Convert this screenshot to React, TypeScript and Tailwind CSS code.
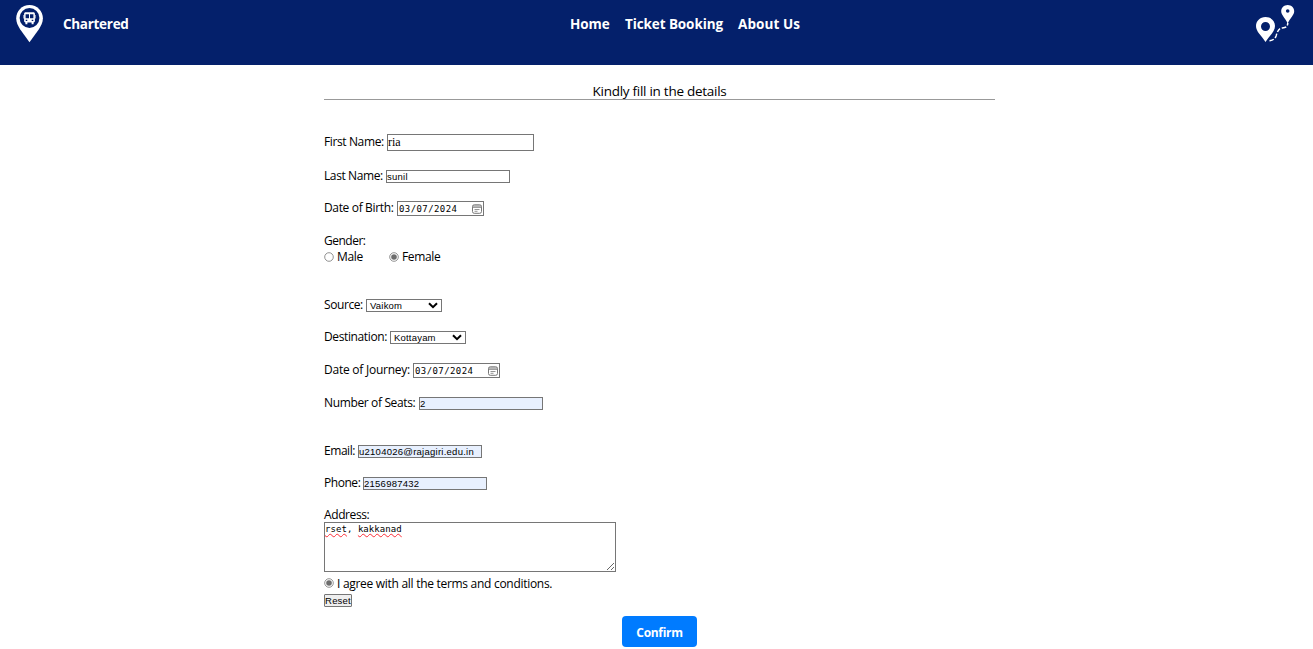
import type { ReactNode } from "react";

function BusPin() {
  return (
    <svg width="28" height="38" viewBox="0 0 28 38" fill="none">
      <path d="M13.500 0C5.900 0 .2 6 .2 13.300c0 4 1.700 7.400 3.900 11L13.500 37.200l9.400-12.900c2.200-3.600 4-7 4-11C26.900 6 21.100 0 13.500 0Z" fill="#fff" />
      <circle cx="13.500" cy="13" r="9.900" fill="#04206b" />
      <path transform="translate(-.5 0)" fillRule="evenodd" d="M10.200 7.300h7.600c1 0 1.600.6 1.600 1.500V16c0 .8-.5 1.400-1.300 1.500v1.700h-2v-1.600h-4.200v1.600h-2v-1.700c-.8-.1-1.300-.7-1.300-1.500V8.800c0-.9.6-1.500 1.600-1.500Zm-.1 2v4h3.400v-4Zm4.400 0v4h3.400v-4ZM10.200 14.800v1.300h1.600v-1.300Zm6 0v1.300h1.600v-1.300Z" fill="#fff" />
      <path d="M7.800 10v3.500M19.200 10v3.500" stroke="#fff" strokeWidth=".8" />
    </svg>
  );
}

function RoutePins() {
  return (
    <svg width="40" height="38" viewBox="0 0 40 38" fill="none">
      <path fillRule="evenodd" d="M9.500 12C4 12 0 16 0 21c0 5.500 5 9 9.500 16 4.500-7 9.500-10.500 9.500-16 0-5-4-9-9.500-9Zm0 5a4.500 4.500 0 1 1 0 9 4.500 4.500 0 0 1 0-9Z" fill="#fff" />
      <path fillRule="evenodd" d="M31.700 0C28 0 25.200 2.800 25.200 6.200c0 3.800 4 6.800 6.500 12.300 2.500-5.500 6.500-8.500 6.500-12.300C38.200 2.800 35.400 0 31.700 0Zm0 4.200a1.800 1.800 0 1 1 0 3.600 1.800 1.800 0 0 1 0-3.600Z" fill="#fff" />
      <path d="M13.500 35.700c3.500-.2 5.600-2 6.600-4.800 1.300-4.200 2.300-7.700 6.300-8 3.300-.2 5.200-.8 5.400-5" stroke="#fff" strokeWidth="1.500" strokeDasharray="4.500 1.800" />
    </svg>
  );
}

function CalendarIcon() {
  return (
    <svg width="10" height="10" viewBox="0 0 10 10" fill="none">
      <rect x=".5" y=".8" width="9" height="8.500" rx="1.800" stroke="#777" strokeWidth="1" />
      <path d="M.6 2h8.800M.6 3.300h8.800" stroke="#888" strokeWidth="1" />
      <path d="M2.500 5.500h5M2.500 7.300h3" stroke="#888" strokeWidth=".9" />
    </svg>
  );
}

function Row({ className, label, labelClass, children }: { className: string; label: string; labelClass: string; children?: ReactNode }) {
  return (
    <div className={`flex items-center ${className}`}>
      <label className={`shrink-0 whitespace-nowrap ${labelClass}`}>{label}</label>
      {children}
    </div>
  );
}

const field = "block shrink-0 border border-[#767676] text-black outline-none rounded-none";
const small = "h-[13px] w-[124px] font-['Liberation_Sans',sans-serif] text-[9.500px] leading-[11px] tracking-[0.250px]";

function DateField({ value }: { value: string }) {
  return (
    <div className="flex h-[15px] w-[87px] shrink-0 items-center justify-between border border-[#767676] pl-px pr-px font-['DejaVu_Sans_Mono',monospace] text-[9px] leading-[13px] tracking-[0.42px]">
      <span className="pt-[2px]">{value}</span>
      <CalendarIcon />
    </div>
  );
}

function SelectField({ value }: { value: string }) {
  return (
    <button type="button" className="flex h-[13px] w-[76px] shrink-0 items-center justify-between border border-[#767676] px-[3px] font-['Liberation_Sans',sans-serif] text-[9.500px] leading-[11px] tracking-[0.200px]">
      <span>{value}</span>
      <svg width="10" height="7" viewBox="0 0 10 7" fill="none">
        <path d="m1 1.200 4 4 4-4" stroke="#000" strokeWidth="2" />
      </svg>
    </button>
  );
}

function Radio({ checked }: { checked?: boolean }) {
  return (
    <svg className="shrink-0" width="10" height="10" viewBox="0 0 10 10" fill="none">
      <circle cx="5" cy="5" r="4.300" stroke="#767676" strokeWidth=".8" />
      {checked && <circle cx="5" cy="5" r="2.800" fill="#6d6d6d" />}
    </svg>
  );
}

export default function App() {
  return (
    <div className="h-[649px] w-full overflow-hidden bg-white font-['Open_Sans',sans-serif] text-[12px] text-black">
      <header className="grid h-[65px] grid-cols-[570px_1fr_57px] items-start bg-[#04206b] text-[13.500px] font-bold leading-[20px] text-white">
        <div className="flex items-start pl-4 pt-[5px]">
          <BusPin />
          <span className="ml-[19px] mt-[9px] tracking-[-0.3px]">Chartered</span>
        </div>
        <nav className="flex gap-[15px] whitespace-nowrap pt-[14px]">
          <a className="w-[40px] tracking-[-0.050px]">Home</a>
          <a className="w-[98px] tracking-[-0.1px]">Ticket Booking</a>
          <a className="tracking-[0.080px]">About Us</a>
        </nav>
        <div className="pt-[5px]">
          <RoutePins />
        </div>
      </header>
      <main className="ml-[324px] w-[671px]">
        <h1 className="h-[34px] pt-[16px] text-center text-[13.500px] leading-[20px] tracking-[-0.270px]">Kindly fill in the details</h1>
        <hr className="mb-[34px] border-t border-[#999]" />
        <form className="leading-[16px]">
          <Row className="h-[17px]" label="First Name:" labelClass="w-[63px] pb-px tracking-[-0.380px]">
            <input aria-label="First Name" defaultValue="ria" className={`${field} h-[17px] w-[147px] font-['Liberation_Serif',serif] text-[12px] leading-[15px]`} />
          </Row>
          <Row className="mt-[19px] h-[13px]" label="Last Name:" labelClass="w-[62px] pb-px tracking-[-0.400px]">
            <input aria-label="Last Name" defaultValue="sunil" className={`${field} ${small}`} />
          </Row>
          <Row className="mt-[18px] h-[15px]" label="Date of Birth:" labelClass="w-[73px] pb-px tracking-[-0.350px]">
            <DateField value="03/07/2024" />
          </Row>
          <Row className="mt-[17px] h-[16px]" label="Gender:" labelClass="tracking-[-0.500px]" />
          <div className="flex h-[16px] items-center tracking-[-0.350px]">
            <label className="flex w-[65px] items-center gap-[3px]"><Radio />Male</label>
            <label className="flex items-center gap-[3px]"><Radio checked />Female</label>
          </div>
          <Row className="mt-[34px] h-[13px]" label="Source:" labelClass="w-[42px] pb-px tracking-[-0.420px]">
            <SelectField value="Vaikom" />
          </Row>
          <Row className="mt-[19px] h-[13px]" label="Destination:" labelClass="w-[66px] pb-px tracking-[-0.380px]">
            <SelectField value="Kottayam" />
          </Row>
          <Row className="mt-[19px] h-[15px]" label="Date of Journey:" labelClass="w-[89px] pb-[2px] tracking-[-0.240px]">
            <DateField value="03/07/2024" />
          </Row>
          <Row className="mt-[19px] h-[13px]" label="Number of Seats:" labelClass="w-[95px] pb-px tracking-[-0.360px]">
            <input aria-label="Number of Seats" defaultValue="2" className={`${field} ${small} bg-[#e8f0fe]`} />
          </Row>
          <Row className="mt-[35px] h-[13px]" label="Email:" labelClass="w-[34px] pb-px tracking-[-0.450px]">
            <input aria-label="Email" defaultValue="u2104026@rajagiri.edu.in" className={`${field} ${small} bg-[#e8f0fe]`} />
          </Row>
          <Row className="mt-[19px] h-[13px]" label="Phone:" labelClass="w-[39px] pb-px tracking-[-0.450px]">
            <input aria-label="Phone" defaultValue="2156987432" className={`${field} ${small} bg-[#e8f0fe]`} />
          </Row>
          <Row className="mt-[17px] h-[15px]" label="Address:" labelClass="pt-px tracking-[-0.400px]" />
          <div className="flex h-[50px] w-[292px] justify-between border border-[#767676] font-['DejaVu_Sans_Mono',monospace] text-[9px] leading-[12px] tracking-[0.060px]">
            <p>
              <span className="underline decoration-red-500 decoration-wavy decoration-[0.6px] underline-offset-[1px]">rset</span>,{" "}
              <span className="underline decoration-red-500 decoration-wavy decoration-[0.6px] underline-offset-[1px]">kakkanad</span>
            </p>
            <svg className="self-end" width="9" height="9" viewBox="0 0 9 9">
              <path d="m1 8 7-7M5 8l3-3" stroke="#555" strokeWidth=".9" />
            </svg>
          </div>
          <label className="mt-[3px] flex h-[16px] items-center gap-[3px] whitespace-nowrap tracking-[-0.290px]">
            <Radio checked /><span className="pt-[2px]">I agree with all the terms and conditions.</span>
          </label>
          <button type="button" className="mt-[3px] flex h-[13px] w-[28px] items-center justify-center rounded-[1px] border border-[#767676] bg-[#efefef] font-['Liberation_Sans',sans-serif] text-[9.500px] leading-[11px] tracking-[0.200px]">Reset</button>
          <button type="button" className="mx-auto mt-[9px] flex h-[31px] w-[75px] items-center justify-center rounded-[4px] bg-[#007bff] pt-[2px] text-[12px] font-bold tracking-[-0.300px] text-white">Confirm</button>
        </form>
      </main>
    </div>
  );
}
